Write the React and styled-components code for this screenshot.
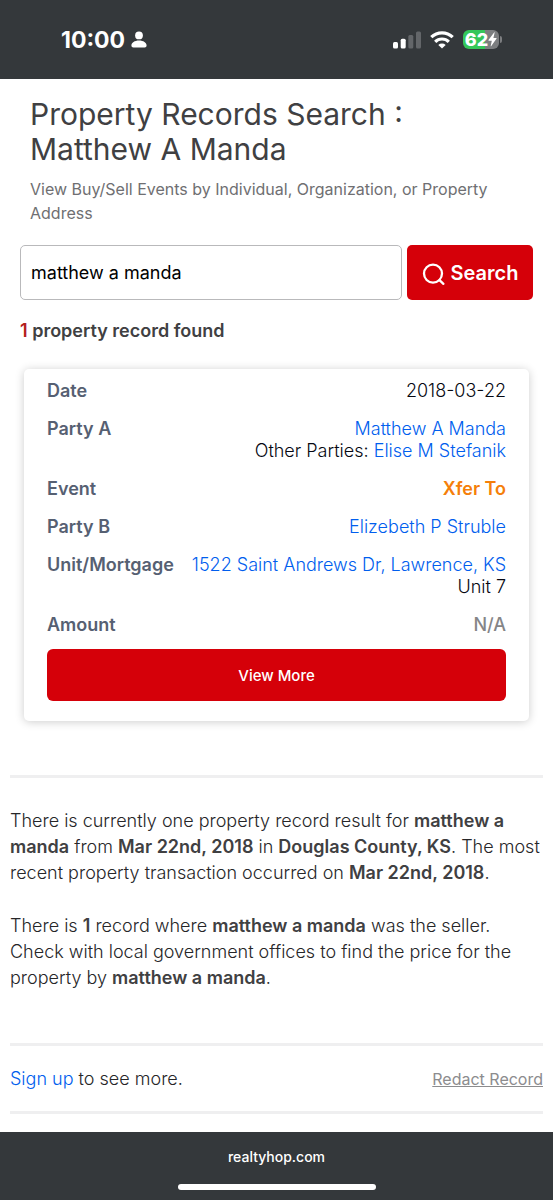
import React, { useState } from "react";
import styled, { createGlobalStyle } from "styled-components";

const GlobalStyle = createGlobalStyle`
  *, *::before, *::after { box-sizing: border-box; }
  body {
    margin: 0;
    background: #fff;
    color: #404042;
    font-family: Inter, "Liberation Sans", sans-serif;
    font-size: 18px;
    line-height: 22px;
  }
  h1, p, dl, dd, dt { margin: 0; }
  button, input { font-family: inherit; }
`;

const Page = styled.div`
  min-height: 100vh;
  display: flex;
  flex-direction: column;
`;

const StatusBar = styled.header`
  display: flex;
  align-items: center;
  justify-content: space-between;
  height: 79px;
  padding: 0 51px 0 61px;
  background: #34383b;
  color: #fff;
`;

const StatusGroup = styled.div`
  display: flex;
  align-items: center;
  gap: ${(p) => p.$gap}px;
`;

const Clock = styled.span`
  font-size: 23px;
  font-weight: 700;
  line-height: 28px;
`;

const Battery = styled.span`
  display: flex;
  align-items: center;
`;

const BatteryBody = styled.span`
  display: flex;
  align-items: center;
  justify-content: center;
  width: 36px;
  height: 19px;
  border-radius: 6px;
  background: linear-gradient(90deg, #35c759 62%, #7c7e80 62%);
  font-size: 18px;
  font-weight: 800;
`;

const BatteryTip = styled.span`
  width: 2px;
  height: 7px;
  margin-left: 1px;
  border-radius: 0 2px 2px 0;
  background: #7c7e80;
`;

const Main = styled.main`
  flex: 1;
  padding: 18px 10px 0;
`;

const Heading = styled.div`
  padding: 0 20px;
`;

const Title = styled.h1`
  max-width: 420px;
  font-size: 30px;
  font-weight: 400;
  line-height: 35px;
`;

const Subtitle = styled.p`
  margin-top: 10px;
  color: #6f6f72;
  font-size: 16px;
  line-height: 24px;
`;

const SearchForm = styled.form`
  display: flex;
  gap: 5px;
  margin: 20px 10px 0;
`;

const SearchInput = styled.input`
  flex: 1;
  min-width: 0;
  height: 55px;
  padding: 0 10px;
  border: 1px solid #b9b9bb;
  border-radius: 5px;
  background: #fff;
  color: #000;
  font-size: 18px;
`;

const SearchButton = styled.button`
  display: flex;
  align-items: center;
  justify-content: center;
  gap: 6px;
  width: 126px;
  height: 55px;
  padding: 0;
  border: 0;
  border-radius: 5px;
  background: #d50009;
  color: #fff;
  font-size: 20px;
  font-weight: 600;
`;

const ResultCount = styled.p`
  margin: 20px 10px 0;
  font-weight: 600;
`;

const CountNumber = styled.span`
  color: #b3201b;
`;

const Card = styled.article`
  margin: 27px 14px 0;
  padding: 11px 23px 20px;
  border-radius: 5px;
  background: #fff;
  box-shadow: 0 1px 10px rgba(0, 0, 0, 0.2);
`;

const Fields = styled.dl`
  display: flex;
  flex-direction: column;
  gap: 16px;
`;

const Field = styled.div`
  display: flex;
  justify-content: space-between;
  gap: 10px;
`;

const Label = styled.dt`
  color: #566072;
  font-weight: 600;
`;

const Value = styled.dd`
  color: ${(p) => p.$color || "#060812"};
  font-weight: ${(p) => p.$weight || 300};
  text-align: right;
`;

const Line = styled.div``;

const Link = styled.a`
  color: #005eee;
  text-decoration: none;
`;

const ViewMore = styled.button`
  display: block;
  width: 100%;
  height: 52px;
  margin-top: 13px;
  border: 0;
  border-radius: 6px;
  background: #d50009;
  color: #fff;
  font-size: 15px;
  font-weight: 500;
`;

const Rule = styled.hr`
  height: 3px;
  margin: 0;
  border: 0;
  background: #efeff0;
`;

const Summary = styled.section`
  display: flex;
  flex-direction: column;
  gap: 27px;
  padding: 30px 0 52px;
  color: #262628;
  font-weight: 300;
  line-height: 26px;

  b {
    color: #404042;
    font-weight: 600;
  }
`;

const Actions = styled.div`
  display: flex;
  align-items: center;
  justify-content: space-between;
  height: 65px;
  color: #262628;
  font-weight: 300;
`;

const RedactLink = styled.a`
  color: #8c8c8e;
  font-size: 16px;
  font-weight: 400;
`;

const RecordSection = styled.section`
  padding-bottom: 54px;
`;

const BrowserBar = styled.footer`
  display: flex;
  flex-direction: column;
  align-items: center;
  gap: 16px;
  margin-top: 16px;
  padding: 14px 0 10px;
  background: #34383b;
  color: #fff;
  font-size: 14px;
  font-weight: 500;
`;

const HomeIndicator = styled.div`
  width: 198px;
  height: 6px;
  border-radius: 3px;
  background: #fff;
`;

const PersonIcon = () => (
  <svg width="16" height="17" viewBox="0 0 16 17" fill="#fff" aria-hidden="true">
    <circle cx="8" cy="4.4" r="3.9" />
    <path d="M.4 14.5C.4 11.6 3.6 9.4 8 9.4s7.6 2.2 7.6 5.1c0 1.3-.8 2-2 2H2.4c-1.2 0-2-.7-2-2Z" />
  </svg>
);

const SignalIcon = () => (
  <svg width="28" height="18" viewBox="0 0 28 18" fill="#fff" aria-hidden="true">
    <rect x="0" y="11" width="5" height="6.5" rx="1.5" />
    <rect x="7.7" y="7.7" width="5" height="9.8" rx="1.5" />
    <rect x="15.3" y="4" width="5" height="13.5" rx="1.5" fill="#636669" />
    <rect x="23" y="0.5" width="5" height="17" rx="1.5" fill="#636669" />
  </svg>
);

const WifiIcon = () => (
  <svg width="24" height="18" viewBox="0 0 24 18" fill="none" stroke="#fff" strokeWidth="3.2" aria-hidden="true">
    <path d="M1.3 6.2a15.4 15.4 0 0 1 21.4 0" />
    <path d="M5.2 10.8a9.7 9.7 0 0 1 13.6 0" />
    <path d="M12 17.6l-3.7-3.6a5.4 5.4 0 0 1 7.4 0Z" fill="#fff" stroke="none" />
  </svg>
);

const BoltIcon = () => (
  <svg width="9" height="15" viewBox="0 0 9 15" fill="#fff" aria-hidden="true">
    <path d="M6.1.5.5 8.1c-.2.3 0 .6.3.6h3L2.7 14c-.1.4.2.5.4.2l5.5-7.6c.2-.3 0-.6-.3-.6H5.4L6.6.8c.1-.4-.2-.6-.5-.3Z" />
  </svg>
);

const SearchIcon = () => (
  <svg width="23" height="24" viewBox="0 0 23 24" fill="none" stroke="#fff" strokeWidth="2.3" strokeLinecap="round" aria-hidden="true">
    <circle cx="11" cy="12.6" r="9" />
    <path d="M17.5 19.1 21.4 22.8" />
  </svg>
);

export default function App() {
  const [query, setQuery] = useState("matthew a manda");

  return (
    <Page>
      <GlobalStyle />
      <StatusBar>
        <StatusGroup $gap={6}>
          <Clock>10:00</Clock>
          <PersonIcon />
        </StatusGroup>
        <StatusGroup $gap={9}>
          <SignalIcon />
          <WifiIcon />
          <Battery>
            <BatteryBody>62<BoltIcon /></BatteryBody>
            <BatteryTip />
          </Battery>
        </StatusGroup>
      </StatusBar>

      <Main>
        <Heading>
          <Title>Property Records Search : Matthew A Manda</Title>
          <Subtitle>View Buy/Sell Events by Individual, Organization, or Property Address</Subtitle>
        </Heading>

        <SearchForm onSubmit={(e) => e.preventDefault()}>
          <SearchInput
            type="text"
            aria-label="Search property records"
            value={query}
            onChange={(e) => setQuery(e.target.value)}
          />
          <SearchButton type="submit"><SearchIcon />Search</SearchButton>
        </SearchForm>

        <RecordSection>
          <ResultCount><CountNumber>1</CountNumber> property record found</ResultCount>
          <Card>
            <Fields>
              <Field><Label>Date</Label><Value>2018-03-22</Value></Field>
              <Field>
                <Label>Party A</Label>
                <Value>
                  <Line><Link href="#matthew">Matthew A Manda</Link></Line>
                  <Line>Other Parties: <Link href="#elise">Elise M Stefanik</Link></Line>
                </Value>
              </Field>
              <Field><Label>Event</Label><Value $color="#f57f0a" $weight={600}>Xfer To</Value></Field>
              <Field>
                <Label>Party B</Label>
                <Value><Link href="#elizebeth">Elizebeth P Struble</Link></Value>
              </Field>
              <Field>
                <Label>Unit/Mortgage</Label>
                <Value>
                  <Line><Link href="#address">1522 Saint Andrews Dr, Lawrence, KS</Link></Line>
                  <Line>Unit 7</Line>
                </Value>
              </Field>
              <Field><Label>Amount</Label><Value $color="#858587" $weight={500}>N/A</Value></Field>
            </Fields>
            <ViewMore type="button">View More</ViewMore>
          </Card>
        </RecordSection>

        <Rule />
        <Summary>
          <p>
            There is currently one property record result for <b>matthew a manda</b> from{" "}
            <b>Mar 22nd, 2018</b> in <b>Douglas County, KS</b>. The most recent property
            transaction occurred on <b>Mar 22nd, 2018</b>.
          </p>
          <p>
            There is <b>1</b> record where <b>matthew a manda</b> was the seller. Check with
            local government offices to find the price for the property by <b>matthew a manda</b>.
          </p>
        </Summary>
        <Rule />
        <Actions>
          <p><Link href="#signup">Sign up</Link> to see more.</p>
          <RedactLink href="#redact">Redact Record</RedactLink>
        </Actions>
        <Rule />
      </Main>

      <BrowserBar>
        <span>realtyhop.com</span>
        <HomeIndicator />
      </BrowserBar>
    </Page>
  );
}
